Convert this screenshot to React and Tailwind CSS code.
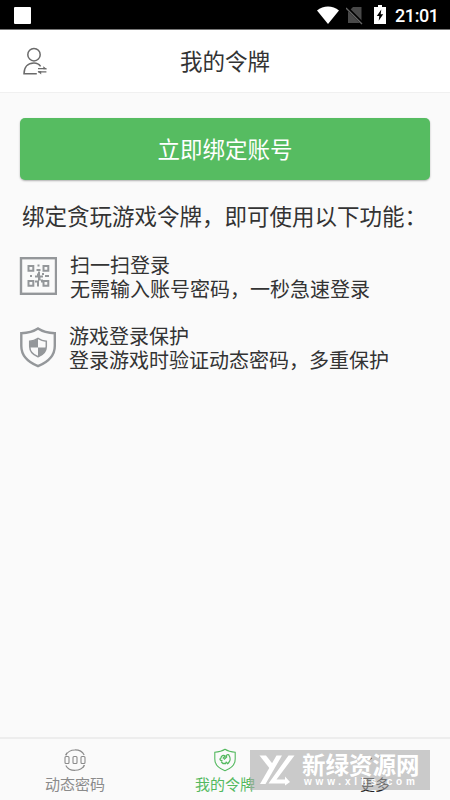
const FEATURES = [
  {
    key: 'scan',
    icon: ScanIcon,
    title: '扫一扫登录',
    desc: '无需输入账号密码，一秒急速登录',
    indent: 'pl-[13px]',
  },
  {
    key: 'protect',
    icon: ProtectIcon,
    title: '游戏登录保护',
    desc: '登录游戏时验证动态密码，多重保护',
    indent: 'pl-[11px]',
  },
]

const TABS = [
  { key: 'code', label: '动态密码', icon: CodeIcon, color: 'text-[#8b8b8b]' },
  { key: 'token', label: '我的令牌', icon: TokenIcon, color: 'text-[#54b95f]' },
  { key: 'more', label: '更多', icon: MoreIcon, color: 'text-[#222222]' },
]

function AccountIcon() {
  return (
    <svg width="26" height="30" viewBox="0 0 26 30" fill="none" stroke="#6b6b6b" strokeWidth="1.5">
      <circle cx="12" cy="8.7" r="6.2" />
      <path d="M18.6 20.4C17 18 14.8 17 12 17C6 17 2 20.8 2 27.8H14.8" />
      <path d="M16 22.7H24.4M16 25.9H24.4" strokeWidth="1.3" />
      <path d="M21.3 20.2L25 23.3H21.3zM19.2 25.3V28.5L15.5 25.3z" fill="#6b6b6b" stroke="none" />
    </svg>
  )
}

function ScanIcon() {
  return (
    <svg width="38" height="38" viewBox="0 0 38 38" fill="none" stroke="#94979a" className="-ml-px">
      <rect x="2" y="1.2" width="35" height="35.6" strokeWidth="2.4" />
      <path
        strokeWidth="2"
        d="M9.5 8.9h4.8v4.8H9.5zM24.5 8.9h4.8v4.8h-4.8zM9.5 23.9h4.8v4.8H9.5zM24.5 23.9h4.8v4.8h-4.8z"
      />
      <path
        fill="#94979a"
        stroke="none"
        d="M18.5 7.5h2v2h-2zM17.5 12h4v2h-4zM11 18h2v2h-2zM19 14.5h2v4h3v2h-2.5v2h2.5v3h-2v-2h-2v6h-2v-4h-2v-2h3v-3h-3v-2h2v-2h1zM26 18h4v2h-4zM23 16h2v2h-2z"
      />
    </svg>
  )
}

function ProtectIcon() {
  return (
    <svg width="38" height="41" viewBox="0 0 38 41" fill="none" stroke="#94979a">
      <path
        strokeWidth="2.4"
        d="M18 1.5C14 4.2 8.5 6 1.3 6.2V19C1.3 28.5 8.5 35.3 18 39.2C27.5 35.3 34.8 28.5 34.8 19V6.2C27.5 6 22 4.2 18 1.5z"
      />
      <path
        strokeWidth="1.5"
        d="M18 11.4C15.5 13 13 14 9.7 14.2V19.5C9.7 24.5 13 27.8 18 29.8C23 27.8 26.3 24.5 26.3 19.5V14.2C23 14 20.5 13 18 11.4z"
      />
      <path
        fill="#94979a"
        stroke="none"
        d="M18 11.4V20.5H9.7V14.2C13 14 15.5 13 18 11.4zM18 20.5H26.3C26 25 23 27.8 18 29.8z"
      />
    </svg>
  )
}

function CodeIcon() {
  return (
    <svg width="24" height="24" viewBox="0 0 24 24" fill="none" stroke="currentColor" strokeWidth="1.1">
      <path d="M2.8 7.2C6.2 .2 17.8 .2 21.2 7M21.3 17.2C17.8 24 6.2 24 2.8 17.4" />
      <path d="M3.8 4.8L2.7 7.3M20.2 19.5L21.4 16.9" />
      <rect x="2" y="8.5" width="4" height="7" rx="1" />
      <rect x="10" y="8.5" width="4" height="7" rx="1" />
      <rect x="18" y="8.5" width="4" height="7" rx="1" />
    </svg>
  )
}

function TokenIcon() {
  return (
    <svg width="24" height="24" viewBox="0 0 24 24" fill="none" stroke="currentColor" strokeWidth="1.1">
      <path d="M12 1.3C9.5 3 6 4 1.8 4.2V11C1.8 16.7 6 20.5 12 22.7C18 20.5 22.2 16.7 22.2 11V4.2C18 4 14.5 3 12 1.3z" />
      <path
        strokeWidth="1.3"
        d="M9.5 12.5C7 13 6.3 10.8 8 10C8 7.6 10.5 6.5 12.2 8L9.8 10.5M11 11.5L13.6 9C12.8 6.8 15.2 5.7 16 7.3C17.8 10.5 17.2 14 14.6 15.6L12.7 13.7M8.2 13.7L10 15.5H13"
      />
    </svg>
  )
}

function MoreIcon() {
  return (
    <svg width="24" height="24" viewBox="0 0 24 24" fill="none" stroke="currentColor" strokeWidth="1.2">
      <path d="M6 12L9 10M16 9L18.5 8L20 11" />
    </svg>
  )
}

function StatusBar() {
  return (
    <div className="h-[30px] shrink-0 bg-black border-b border-[#777777] flex items-center justify-between pl-[14px] pr-3">
      <div className="size-[17px] mt-px rounded-[1px] bg-white" />
      <div className="flex items-center text-white">
        <svg width="22" height="18" viewBox="0 0 22 18" fill="white">
          <path d="M0 4.5C6.3-.8 15.7-.8 22 4.5L11 18z" />
        </svg>
        <svg width="18" height="20" viewBox="0 0 18 20" className="ml-[7px]">
          <path d="M7 2H15.5V18H2V7z" fill="#494949" />
          <path d="M0 2L17 19" stroke="black" strokeWidth="3.2" />
          <path d="M0 3L16 19" stroke="#666666" strokeWidth="1.3" />
        </svg>
        <svg width="12" height="19" viewBox="0 0 12 19" className="ml-[10px]">
          <path d="M4 0H8V2H12V19H0V2H4z" fill="white" />
          <path d="M7.3 4.5L2.8 11H5.3L4.7 15.8L9.2 9.2H6.7z" fill="black" />
        </svg>
        <span className="mt-[2px] ml-[9px] w-[43px] whitespace-nowrap font-['Roboto',sans-serif] text-[18px] leading-5 font-medium tracking-[-0.4px]">
          21:01
        </span>
      </div>
    </div>
  )
}

function Header() {
  return (
    <header className="h-[63px] shrink-0 grid grid-cols-3 items-center bg-white border-b border-[#f0f0f0]">
      <div className="pl-[22px]">
        <AccountIcon />
      </div>
      <h1 className="-mt-[2px] text-center text-[22.5px] leading-8 text-[#333333]">我的令牌</h1>
    </header>
  )
}

function Feature({ item }) {
  const Icon = item.icon
  return (
    <li className="flex items-center h-12">
      <Icon />
      <div className={`pt-[2px] text-[20px] leading-6 whitespace-nowrap ${item.indent}`}>
        <p>{item.title}</p>
        <p>{item.desc}</p>
      </div>
    </li>
  )
}

// Site stamp laid over the right end of the tab bar
function Watermark() {
  return (
    <div className="absolute left-[250px] bottom-[10px] w-[180px] h-10 bg-[#aaaaaa]/60 flex text-white">
      <svg width="52" height="40" viewBox="0 0 52 40" fill="white">
        <path d="M9.5 5.5H16L23.5 15L20.5 19.5z" />
        <path d="M26.5 5.5H32L15.5 34H10z" />
        <path d="M38.5 5.5H44.5L26.5 29.5H35V26.5L40 32L35 35.5V33.5H18.5z" />
      </svg>
      <div className="whitespace-nowrap">
        <p className="mt-[2px] h-6 text-[23.5px] leading-6 font-bold">新绿资源网</p>
        <p className="pl-[2px] font-['Liberation_Sans',sans-serif] text-[10px] leading-[11px] font-bold tracking-[3.8px]">
          www.xlhs.com
        </p>
      </div>
    </div>
  )
}

function TabBar() {
  return (
    <nav className="relative h-[63px] shrink-0 grid grid-cols-3 border-t-2 border-[#ededed]">
      {TABS.map(({ key, label, icon: Icon, color }) => (
        <div key={key} className={`flex flex-col items-center pt-[9px] ${color}`}>
          <Icon />
          <span className="text-[15px] leading-6">{label}</span>
        </div>
      ))}
      <Watermark />
    </nav>
  )
}

export default function App() {
  return (
    <div className="h-screen w-full flex flex-col overflow-hidden bg-[#fafafa] text-[#333333] font-['Noto_Sans_CJK_SC',sans-serif]">
      <StatusBar />
      <Header />
      <main className="flex-1 px-5 pt-[25px]">
        <button className="block w-full h-[62px] pb-[2px] rounded-[5px] bg-[#56bc61] text-[22.5px] leading-8 text-white shadow-[0_1px_2px_rgba(0,0,0,0.3)]">
          立即绑定账号
        </button>
        <p className="mt-[19px] pl-[2px] text-[22.5px] leading-8 whitespace-nowrap">
          绑定贪玩游戏令牌，即可使用以下功能：
        </p>
        <ul className="mt-[21px] space-y-[23px]">
          {FEATURES.map(item => (
            <Feature key={item.key} item={item} />
          ))}
        </ul>
      </main>
      <TabBar />
    </div>
  )
}
